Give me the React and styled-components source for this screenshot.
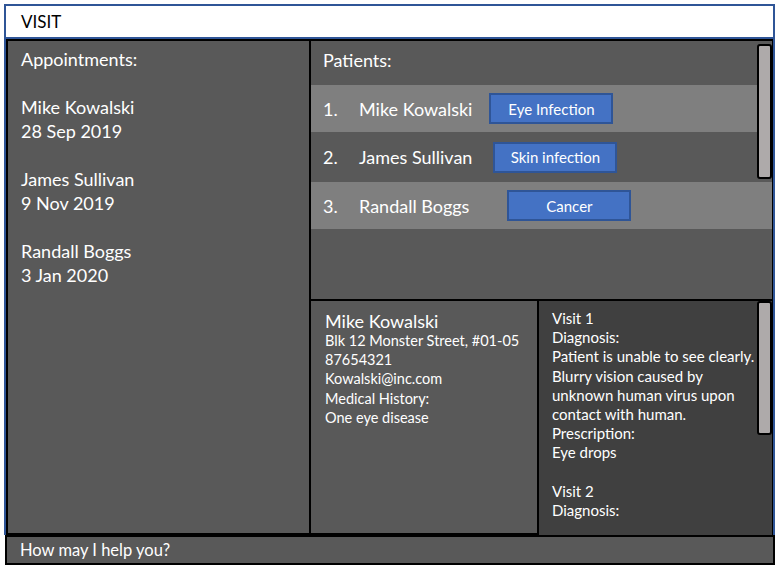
import React from "react";
import styled, { createGlobalStyle } from "styled-components";

const GlobalStyle = createGlobalStyle`
  body {
    margin: 0;
    background: #ffffff;
    font-family: Lato, "Open Sans", sans-serif;
  }
  * { box-sizing: border-box; }
`;

const Frame = styled.div`
  width: 771px;
  margin: 4px 0 0 4px;
  display: flex;
  flex-direction: column;
`;

const Header = styled.div`
  height: 35px;
  background: #ffffff;
  border: 2px solid #2f5597;
  padding-left: 15px;
  display: flex;
  align-items: center;
  font-size: 17px;
  color: #000000;
`;

const Body = styled.div`
  height: 496px;
  display: grid;
  grid-template-columns: 304px 1fr;
  border-left: 2px solid #2f5597;
  border-right: 2px solid #2f5597;
`;

const AppointmentPanel = styled.div`
  background: #595959;
  border: 2px solid #000000;
  border-right-width: 1px;
  padding: 6px 0 0 13px;
  color: #ffffff;
  font-size: 18px;
  line-height: 24px;
`;

const Line = styled.div`
  min-height: ${(p) => (p.$tall ? 24 : 19)}px;
  white-space: nowrap;
`;

const RightColumn = styled.div`
  display: grid;
  grid-template-rows: 260px 1fr;
  border-top: 2px solid #000000;
  border-right: 1px solid #000000;
`;

const PatientsPanel = styled.div`
  position: relative;
  background: #595959;
  border-left: 1px solid #000000;
  border-bottom: 2px solid #000000;
  color: #ffffff;
`;

const PanelTitle = styled.div`
  height: 44px;
  padding: 8px 0 0 12px;
  font-size: 18px;
`;

const PatientRow = styled.div`
  height: ${(p) => (p.$highlight ? 47 : 50)}px;
  display: flex;
  align-items: center;
  padding-left: 12px;
  font-size: 18px;
  background: ${(p) => (p.$highlight ? "#7f7f7f" : "transparent")};
`;

const Index = styled.span`
  width: 36px;
`;

const Name = styled.span`
  white-space: nowrap;
`;

const TagButton = styled.button`
  width: 124px;
  height: 31px;
  margin-left: ${(p) => p.$gap}px;
  background: #4472c4;
  border: 2px solid #2f5597;
  color: #ffffff;
  font-family: Lato, "Open Sans", sans-serif;
  font-size: 15px;
  padding: 0;
`;

const ScrollThumb = styled.div`
  position: absolute;
  right: 0;
  top: ${(p) => p.$top}px;
  width: 15px;
  height: ${(p) => p.$height}px;
  background: #aeaaaa;
  border: 2px solid #000000;
  border-radius: 3px;
`;

const DetailRow = styled.div`
  display: grid;
  grid-template-columns: 229px 1fr;
`;

const InfoPanel = styled.div`
  background: #595959;
  border-left: 1px solid #000000;
  border-right: 2px solid #000000;
  border-bottom: 2px solid #000000;
  padding: 8px 0 0 14px;
  color: #ffffff;
  font-size: 14.5px;
  line-height: 19.2px;
`;

const InfoName = styled.div`
  font-size: 18px;
  line-height: 24px;
  margin-bottom: -2px;
`;

const VisitPanel = styled.div`
  position: relative;
  background: #404040;
  padding: 8px 0 0 13px;
  color: #ffffff;
  font-size: 15px;
  line-height: 19.2px;
`;

const CommandBar = styled.div`
  height: 30px;
  background: #595959;
  border: 2px solid #000000;
  margin-left: 1px;
  padding-left: 13px;
  display: flex;
  align-items: center;
  color: #ffffff;
  font-size: 16.5px;
`;

const appointments = [
  ["Mike Kowalski", "28 Sep 2019"],
  ["James Sullivan", "9 Nov 2019"],
  ["Randall Boggs", "3 Jan 2020"],
];

const patients = [
  { name: "Mike Kowalski", tag: "Eye Infection", gap: 17 },
  { name: "James Sullivan", tag: "Skin infection", gap: 21 },
  { name: "Randall Boggs", tag: "Cancer", gap: 38 },
];

const info = [
  "Blk 12 Monster Street, #01-05",
  "87654321",
  "Kowalski@inc.com",
  "Medical History:",
  "One eye disease",
];

const visits = [
  "Visit 1",
  "Diagnosis:",
  "Patient is unable to see clearly.",
  "Blurry vision caused by",
  "unknown human virus upon",
  "contact with human.",
  "Prescription:",
  "Eye drops",
  "",
  "Visit 2",
  "Diagnosis:",
];

export default function App() {
  return (
    <>
      <GlobalStyle />
      <Frame>
        <Header>VISIT</Header>
        <Body>
          <AppointmentPanel>
            <Line $tall>Appointments:</Line>
            {appointments.map(([name, date]) => (
              <React.Fragment key={name}>
                <Line $tall />
                <Line $tall>{name}</Line>
                <Line $tall>{date}</Line>
              </React.Fragment>
            ))}
          </AppointmentPanel>
          <RightColumn>
            <PatientsPanel>
              <PanelTitle>Patients:</PanelTitle>
              {patients.map((p, i) => (
                <PatientRow key={p.name} $highlight={i % 2 === 0}>
                  <Index>{i + 1}.</Index>
                  <Name>{p.name}</Name>
                  <TagButton $gap={p.gap}>{p.tag}</TagButton>
                </PatientRow>
              ))}
              <ScrollThumb $top={3} $height={135} />
            </PatientsPanel>
            <DetailRow>
              <InfoPanel>
                <InfoName>Mike Kowalski</InfoName>
                {info.map((t) => (
                  <Line key={t}>{t}</Line>
                ))}
              </InfoPanel>
              <VisitPanel>
                {visits.map((t, i) => (
                  <Line key={i}>{t}</Line>
                ))}
                <ScrollThumb $top={0} $height={134} />
              </VisitPanel>
            </DetailRow>
          </RightColumn>
        </Body>
        <CommandBar>How may I help you?</CommandBar>
      </Frame>
    </>
  );
}
